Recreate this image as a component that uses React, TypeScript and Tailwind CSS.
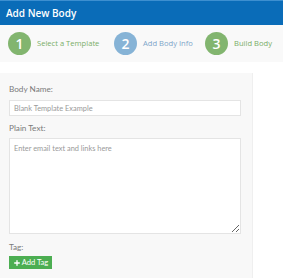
import { Plus } from "lucide-react";

const steps = [
  { n: 1, label: "Select a Template", circle: "bg-[#82b56f]", text: "text-[#7aae68]", w: "w-[106px]" },
  { n: 2, label: "Add Body Info", circle: "bg-[#86b3d6]", text: "text-[#7ea6c9]", w: "w-[91px]" },
  { n: 3, label: "Build Body", circle: "bg-[#82b56f]", text: "text-[#7aae68]", w: "w-auto" },
];

export default function App() {
  return (
    <div className="w-[283px] h-[278px] overflow-hidden bg-white font-['Open_Sans',sans-serif]">
      {/* Header */}
      <div className="h-[25px] bg-[#0a6cb8] border-t border-[#3d8fd0] flex items-center px-[6px]">
        <span className="text-white text-[10px] font-semibold">Add New Body</span>
      </div>

      {/* Steps */}
      <div className="h-[37px] bg-[#f9f9f9] flex items-center pl-[8px]">
        {steps.map((s) => (
          <div key={s.n} className={`flex items-center gap-[6px] ${s.w}`}>
            <div className={`w-[23px] h-[23px] rounded-full ${s.circle} flex items-center justify-center text-white text-[14px] font-semibold`}>
              {s.n}
            </div>
            <span className={`${s.text} text-[7.6px]`}>{s.label}</span>
          </div>
        ))}
      </div>

      {/* Form panel */}
      <div className="mt-[11px] w-[253px] h-[205px] bg-[#f8f8f8] border-r border-[#efefef] px-[9px] pt-[11px] font-['Lato',sans-serif]">
        <div className="text-[8.2px] text-[#7a7a7a] leading-[10px]">Body Name:</div>
        <input
          className="mt-[6px] block w-[232px] h-[16px] bg-white border border-[#e4e4e4] px-[4px] text-[7.4px] text-[#555] placeholder:text-[#9a9a9a] outline-none"
          placeholder="Blank Template Example"
        />
        <div className="mt-[7px] text-[8.2px] text-[#7a7a7a] leading-[10px]">Plain Text:</div>
        <textarea
          className="mt-[5px] block w-[232px] h-[96px] bg-white border border-[#e4e4e4] px-[4px] py-[4px] text-[7.4px] text-[#555] placeholder:text-[#9a9a9a] outline-none"
          placeholder="Enter email text and links here"
        />
        <div className="mt-[8px] text-[8.2px] text-[#7a7a7a] leading-[10px]">Tag:</div>
        <button className="mt-[4px] h-[13px] w-[43px] bg-[#4cae52] text-white text-[7.6px] flex items-center justify-center gap-[1px]">
          <Plus size={8} strokeWidth={4} />
          Add Tag
        </button>
      </div>
    </div>
  );
}
